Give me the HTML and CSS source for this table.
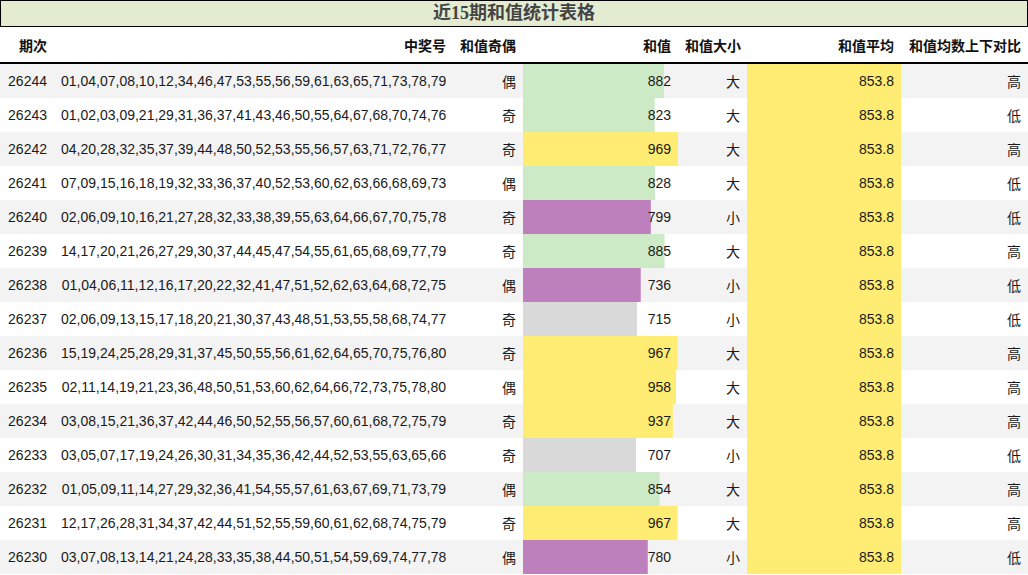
FILE: index.html
```html
<!DOCTYPE html>
<html lang="zh">
<head>
<meta charset="utf-8">
<title>近15期和值统计表格</title>
<link rel="stylesheet" href="styles.css">
</head>
<body>
<div class="title">近15期和值统计表格</div>
<table class="stats">
  <colgroup>
    <col class="c-issue"><col class="c-nums"><col class="c-parity"><col class="c-sum"><col class="c-size"><col class="c-avg"><col class="c-cmp">
  </colgroup>
  <thead>
    <tr><th>期次</th><th>中奖号</th><th>和值奇偶</th><th>和值</th><th>和值大小</th><th>和值平均</th><th>和值均数上下对比</th></tr>
  </thead>
  <tbody>
    <tr><td>26244</td><td>01,04,07,08,10,12,34,46,47,53,55,56,59,61,63,65,71,73,78,79</td><td>偶</td><td class="bar green" style="background-size:91.02% 100%">882</td><td>大</td><td class="avg">853.8</td><td>高</td></tr>
    <tr><td>26243</td><td>01,02,03,09,21,29,31,36,37,41,43,46,50,55,64,67,68,70,74,76</td><td>奇</td><td class="bar green" style="background-size:84.93% 100%">823</td><td>大</td><td class="avg">853.8</td><td>低</td></tr>
    <tr><td>26242</td><td>04,20,28,32,35,37,39,44,48,50,52,53,55,56,57,63,71,72,76,77</td><td>奇</td><td class="bar yellow" style="background-size:100% 100%">969</td><td>大</td><td class="avg">853.8</td><td>高</td></tr>
    <tr><td>26241</td><td>07,09,15,16,18,19,32,33,36,37,40,52,53,60,62,63,66,68,69,73</td><td>偶</td><td class="bar green" style="background-size:85.45% 100%">828</td><td>大</td><td class="avg">853.8</td><td>低</td></tr>
    <tr><td>26240</td><td>02,06,09,10,16,21,27,28,32,33,38,39,55,63,64,66,67,70,75,78</td><td>奇</td><td class="bar purple" style="background-size:82.46% 100%">799</td><td>小</td><td class="avg">853.8</td><td>低</td></tr>
    <tr><td>26239</td><td>14,17,20,21,26,27,29,30,37,44,45,47,54,55,61,65,68,69,77,79</td><td>奇</td><td class="bar green" style="background-size:91.33% 100%">885</td><td>大</td><td class="avg">853.8</td><td>高</td></tr>
    <tr><td>26238</td><td>01,04,06,11,12,16,17,20,22,32,41,47,51,52,62,63,64,68,72,75</td><td>偶</td><td class="bar purple" style="background-size:75.95% 100%">736</td><td>小</td><td class="avg">853.8</td><td>低</td></tr>
    <tr><td>26237</td><td>02,06,09,13,15,17,18,20,21,30,37,43,48,51,53,55,58,68,74,77</td><td>奇</td><td class="bar gray" style="background-size:73.79% 100%">715</td><td>小</td><td class="avg">853.8</td><td>低</td></tr>
    <tr><td>26236</td><td>15,19,24,25,28,29,31,37,45,50,55,56,61,62,64,65,70,75,76,80</td><td>奇</td><td class="bar yellow" style="background-size:99.79% 100%">967</td><td>大</td><td class="avg">853.8</td><td>高</td></tr>
    <tr><td>26235</td><td>02,11,14,19,21,23,36,48,50,51,53,60,62,64,66,72,73,75,78,80</td><td>偶</td><td class="bar yellow" style="background-size:98.86% 100%">958</td><td>大</td><td class="avg">853.8</td><td>高</td></tr>
    <tr><td>26234</td><td>03,08,15,21,36,37,42,44,46,50,52,55,56,57,60,61,68,72,75,79</td><td>奇</td><td class="bar yellow" style="background-size:96.70% 100%">937</td><td>大</td><td class="avg">853.8</td><td>高</td></tr>
    <tr><td>26233</td><td>03,05,07,17,19,24,26,30,31,34,35,36,42,44,52,53,55,63,65,66</td><td>奇</td><td class="bar gray" style="background-size:72.96% 100%">707</td><td>小</td><td class="avg">853.8</td><td>低</td></tr>
    <tr><td>26232</td><td>01,05,09,11,14,27,29,32,36,41,54,55,57,61,63,67,69,71,73,79</td><td>偶</td><td class="bar green" style="background-size:88.13% 100%">854</td><td>大</td><td class="avg">853.8</td><td>高</td></tr>
    <tr><td>26231</td><td>12,17,26,28,31,34,37,42,44,51,52,55,59,60,61,62,68,74,75,79</td><td>奇</td><td class="bar yellow" style="background-size:99.79% 100%">967</td><td>大</td><td class="avg">853.8</td><td>高</td></tr>
    <tr><td>26230</td><td>03,07,08,13,14,21,24,28,33,35,38,44,50,51,54,59,69,74,77,78</td><td>偶</td><td class="bar purple" style="background-size:80.50% 100%">780</td><td>小</td><td class="avg">853.8</td><td>低</td></tr>
  </tbody>
</table>
</body>
</html>
```

FILE: styles.css
```css
html, body {
  margin: 0;
  padding: 0;
  background: #ffffff;
}
body {
  width: 1028px;
  font-family: "Liberation Sans", "Noto Sans CJK SC", sans-serif;
  font-size: 14px;
  color: #1a1a1a;
}
.title {
  box-sizing: border-box;
  height: 27px;
  border: 1px solid #000;
  background: #e3ebd1;
  color: #444444;
  font-family: "Liberation Serif", "Noto Sans CJK SC", serif;
  font-weight: bold;
  font-size: 18px;
  line-height: 24px;
  text-align: center;
}
.stats {
  width: 1028px;
  table-layout: fixed;
  border-collapse: collapse;
  border-spacing: 0;
}
.c-issue { width: 54px; }
.c-nums { width: 399px; }
.c-parity { width: 70px; }
.c-sum { width: 155px; }
.c-size { width: 69px; }
.c-avg { width: 154px; }
.c-cmp { width: 127px; }
.stats th,
.stats td {
  padding: 0 7px;
  text-align: right;
  white-space: nowrap;
  overflow: hidden;
}
.stats th {
  height: 35px;
  font-weight: bold;
  color: #111;
  border-bottom: 2px solid #000;
  vertical-align: middle;
}
.stats td {
  height: 34px;
  vertical-align: middle;
}
.stats tbody tr:nth-child(odd) {
  background: #f3f3f3;
}
.stats tbody tr:nth-child(even) {
  background: #ffffff;
}
.bar {
  background-repeat: no-repeat;
  background-position: left top;
}
.bar.green { background-image: linear-gradient(#cdeac7, #cdeac7); }
.bar.yellow { background-image: linear-gradient(#ffec72, #ffec72); }
.bar.purple { background-image: linear-gradient(#bd80bc, #bd80bc); }
.bar.gray { background-image: linear-gradient(#d9d9d9, #d9d9d9); }
.stats td.avg {
  background: #ffec72;
}
```
